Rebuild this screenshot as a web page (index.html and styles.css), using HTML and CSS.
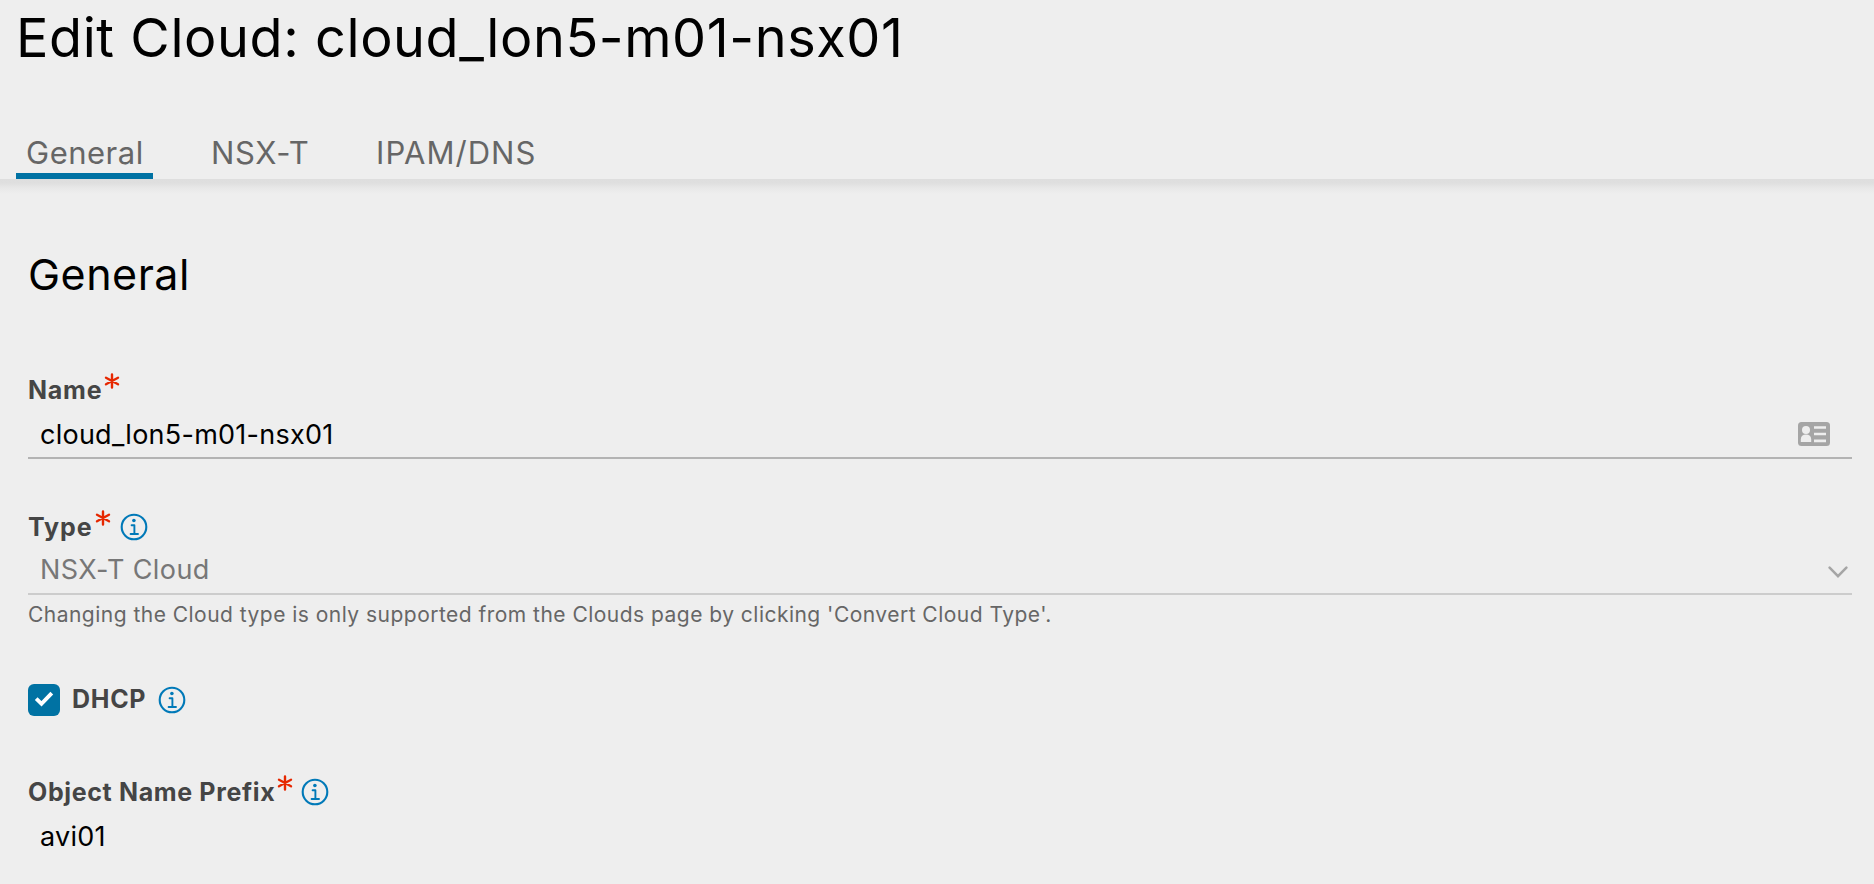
FILE: index.html
```
<!DOCTYPE html>
<html lang="en">
<head>
<meta charset="utf-8">
<title>Edit Cloud</title>
<link rel="stylesheet" href="styles.css">
</head>
<body>
<svg class="sprite" aria-hidden="true">
  <symbol id="info" viewBox="0 0 28 28"><circle cx="14" cy="14" r="12.3" fill="none" stroke="currentColor" stroke-width="2.1"/><circle cx="13.9" cy="7.5" r="1.8" fill="currentColor"/><path d="M11.6 12.2h2.8v8.7M10.6 21h7.4" fill="none" stroke="currentColor" stroke-width="1.9" stroke-linecap="round" stroke-linejoin="round"/></symbol>
  <symbol id="star" viewBox="0 0 16 16"><path d="M8 1.5v13M2 4.7l12 6.6M14 4.7L2 11.3" fill="none" stroke="currentColor" stroke-width="2.4" stroke-linecap="round"/></symbol>
</svg>
<header class="header">
  <h1 class="title"><span>Edit Cloud: cloud_lon5-m01-nsx01</span></h1>
  <nav class="tabs">
    <a class="tab tab-general active">General</a>
    <a class="tab tab-nsx">NSX-T</a>
    <a class="tab tab-ipam">IPAM/DNS</a>
  </nav>
</header>
<main class="content">
  <h2 class="section-title">General</h2>
  <section class="field">
    <div class="label"><span class="t-name">Name</span><svg class="star"><use href="#star"/></svg></div>
    <div class="input"><span class="v-name">cloud_lon5-m01-nsx01</span>
      <svg class="card" viewBox="0 0 32 24"><rect width="32" height="24" rx="3.5" fill="#a5a5a5"/><circle cx="8" cy="8" r="4" fill="#eee"/><path d="M2.8 20v-2.5c0-3.2 2-5 5.2-5s5.2 1.8 5.2 5V20z" fill="#eee"/><path d="M16 5.5h12M16 12h12M16 18.8h12" stroke="#eee" stroke-width="2.7"/></svg>
    </div>
  </section>
  <section class="field type-field">
    <div class="label"><span class="t-type">Type</span><svg class="star"><use href="#star"/></svg><svg class="info"><use href="#info"/></svg></div>
    <div class="input disabled"><span class="v-type">NSX-T Cloud</span>
      <svg class="chevron" viewBox="0 0 20 12"><path d="M1.6 1.6L10 10.1l8.4-8.5" fill="none" stroke="#a5a5a5" stroke-width="2.5" stroke-linecap="round"/></svg>
    </div>
    <p class="help"><span>Changing the Cloud type is only supported from the Clouds page by clicking 'Convert Cloud Type'.</span></p>
  </section>
  <section class="check-row">
    <span class="checkbox"><svg viewBox="0 0 32 32"><path d="M8.2 14.7l5.3 5.1L23.8 9.2" fill="none" stroke="#fff" stroke-width="3.9"/></svg></span>
    <span class="t-dhcp">DHCP</span><svg class="info"><use href="#info"/></svg>
  </section>
  <section class="field prefix-field">
    <div class="label"><span class="t-prefix">Object Name Prefix</span><svg class="star"><use href="#star"/></svg><svg class="info"><use href="#info"/></svg></div>
    <div class="input"><span class="v-prefix">avi01</span></div>
  </section>
</main>
</body>
</html>
```
FILE: styles.css
```
* { box-sizing: border-box; }
body { margin: 0; height: 884px; overflow: hidden; background: #eee; color: #000; font-family: Inter, "Liberation Sans", sans-serif; font-weight: 400; white-space: nowrap; font-kerning: normal; }
.sprite { position: absolute; width: 0; height: 0; }
h1, h2, p { margin: 0; font-weight: 400; }
.header { height: 179px; padding-left: 16px; display: flex; flex-direction: column; justify-content: space-between; }
.title { font-size: 54px; line-height: 76px; letter-spacing: .58px; }
.tabs { display: flex; height: 49px; color: #666; font-size: 31px; line-height: 46px; }
.tab { padding: 0 10px; }
.tab-general { width: 137px; margin-right: 48px; letter-spacing: .5px; }
.tab-nsx { width: 165px; letter-spacing: .7px; }
.tab-ipam { letter-spacing: 1.05px; }
.tab.active { border-bottom: 6px solid #0072a3; }
.content { padding: 66px 22px 0 28px; background: linear-gradient(#dedede 0, #dfdfdf 4px, #e8e8e8 9px, #eee 15px) no-repeat; }
.section-title { height: 119px; font-size: 43px; line-height: 58px; letter-spacing: .5px; }
.label { display: flex; align-items: center; height: 46px; color: #454545; font-size: 25px; line-height: 46px; font-weight: 700; padding-top: 6px; letter-spacing: .75px; }
.star { width: 16px; height: 16px; color: #e62700; margin: -18px 0 0 2px; flex: none; }
.info { width: 28px; height: 28px; color: #0079b8; margin-left: 9px; flex: none; }
.input { display: flex; justify-content: space-between; align-items: center; height: 49px; padding: 0 22px 0 12px; border-bottom: 2px solid #b3b3b3; font-size: 27px; letter-spacing: .25px; }
.v-name { padding-top: 2px; }
.card { width: 32px; height: 24px; }
.type-field { margin-top: 41px; }
.type-field .label { letter-spacing: .95px; padding-top: 7px; }
.disabled { color: #777; border-color: #ccc; padding-right: 4px; letter-spacing: .4px; }
.chevron { width: 20px; height: 12px; margin-top: 5px; }
.help { color: #666; font-size: 21px; line-height: 40px; height: 40px; letter-spacing: .475px; }
.check-row { margin-top: 49px; display: flex; align-items: center; height: 32px; color: #454545; font-size: 25px; font-weight: 700; letter-spacing: .7px; }
.t-dhcp { margin: -2px 3px 0 0; }
.checkbox { width: 32px; height: 32px; border-radius: 6px; background: #0072a3; margin-right: 12px; }
.checkbox svg { display: block; }
.prefix-field { margin-top: 50px; }
.prefix-field .label { letter-spacing: .64px; padding-top: 5px; }
.prefix-field .info { margin-left: 8px; }
.prefix-field .input { border: 0; }
```
